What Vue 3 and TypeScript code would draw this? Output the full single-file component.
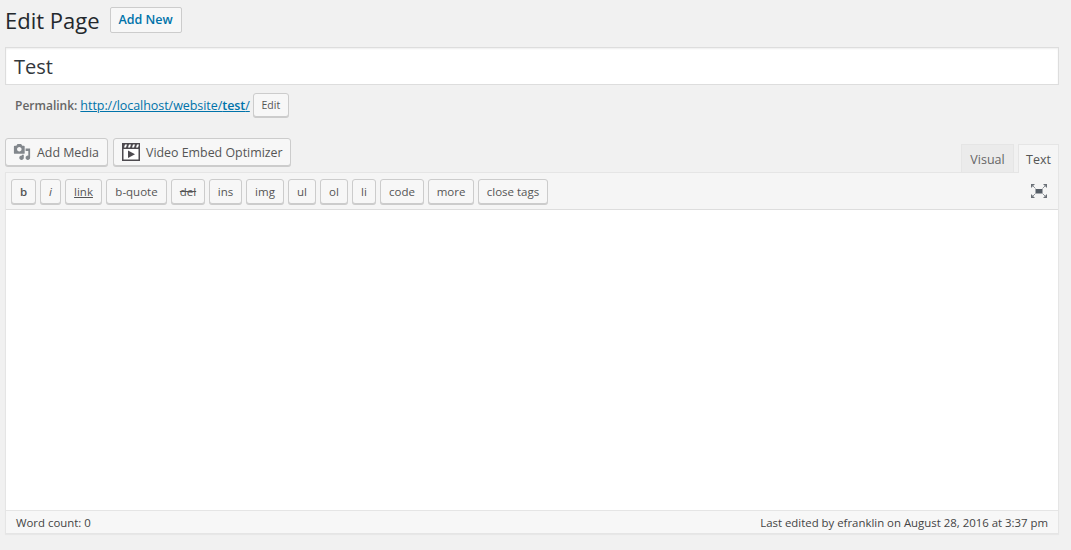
<script setup lang="ts">
interface QuickTag {
  label: string
  width: number
  kind?: string
}

const tags: QuickTag[] = [
  { label: 'b', width: 25, kind: 'bold' },
  { label: 'i', width: 21, kind: 'italic' },
  { label: 'link', width: 37, kind: 'under' },
  { label: 'b-quote', width: 61 },
  { label: 'del', width: 34, kind: 'strike' },
  { label: 'ins', width: 33 },
  { label: 'img', width: 38 },
  { label: 'ul', width: 28 },
  { label: 'ol', width: 28 },
  { label: 'li', width: 24 },
  { label: 'code', width: 44 },
  { label: 'more', width: 46 },
  { label: 'close tags', width: 70 }
]
</script>

<template>
  <div class="page">
    <header class="heading">
      <h1>Edit Page</h1>
      <a class="add-new">Add New</a>
    </header>

    <div class="title-box">Test</div>

    <div class="permalink">
      <strong>Permalink:</strong>
      <a class="perma-link">http://localhost/website/<b>test</b>/</a>
      <button class="btn edit-slug">Edit</button>
    </div>

    <div class="editor-top">
      <div class="media">
        <button class="btn media-btn add-media">
          <svg width="18" height="18" viewBox="0 0 20 20" aria-hidden="true">
            <path fill="#82878c" d="M13 11V4c0-.55-.45-1-1-1h-1.670L9 1H5L3.670 3H2c-.55 0-1 .45-1 1v7c0 .55.45 1 1 1h10c.55 0 1-.45 1-1zM7 4.500c1.380 0 2.500 1.120 2.500 2.500S8.380 9.500 7 9.500 4.500 8.380 4.500 7 5.620 4.500 7 4.500zM14 6h5v10.500c0 1.380-1.120 2.500-2.500 2.500S14 17.880 14 16.500s1.120-2.500 2.500-2.500c.17 0 .34.020.5.050V9h-3V6zm-4 8.050V13h2v3.500c0 1.380-1.120 2.500-2.500 2.500S7 17.880 7 16.500 8.120 14 9.500 14c.17 0 .34.020.5.050z" />
          </svg>
          Add Media
        </button>
        <button class="btn media-btn veo">
          <svg width="18" height="18" viewBox="0 0 18 18" aria-hidden="true">
            <path fill="#4d4a4f" d="M0 0h18v18H0z" />
            <path fill="#fff" d="M1.500 6h15v10.500h-15z" />
            <path fill="#fff" d="M3 1.500h2l-1 3H2zM7 1.500h2l-1 3H6zM11 1.500h2l-1 3h-2zM15 1.500h2l-1 3h-2z" />
            <path fill="#4d4a4f" d="M6 7.500l7 3.700-7 3.800z" />
          </svg>
          Video Embed Optimizer
        </button>
      </div>
      <div class="tabs">
        <span class="tab visual">Visual</span>
        <span class="tab text">Text</span>
      </div>
    </div>

    <section class="editor">
      <div class="toolbar">
        <button
          v-for="tag in tags"
          :key="tag.label"
          class="btn tag"
          :class="tag.kind"
          :style="{ width: tag.width + 'px' }"
        >{{ tag.label }}</button>
        <svg class="fullscreen" width="18" height="16" viewBox="0 0 18 16" aria-hidden="true">
          <path fill="#555d66" d="M5.500 6h7v4.500h-7z" />
          <path fill="#6b7077" d="M1 1h4L1 5zM17 1h-4l4 4zM1 15h4l-4-4zM17 15h-4l4-4z" />
          <path stroke="#8f959b" stroke-width="1" fill="none" d="M2.500 2.500L5.500 5.500M15.500 2.500L12.500 5.500M2.500 13.500L5.500 10.500M15.500 13.500L12.500 10.500" />
        </svg>
      </div>
      <div class="content"></div>
      <footer class="status">
        <span>Word count: 0</span>
        <span>Last edited by efranklin on August 28, 2016 at 3:37 pm</span>
      </footer>
    </section>
  </div>
</template>

<style>
html,
body {
  margin: 0;
  background: #f1f1f1;
}
</style>

<style scoped>
.page {
  box-sizing: border-box;
  width: 1071px;
  height: 550px;
  padding: 7px 12px 0 5px;
  font-family: "Open Sans", "Noto Sans", sans-serif;
  color: #444;
  font-size: 12px;
  background: #f1f1f1;
}
.heading {
  display: flex;
  align-items: center;
  height: 26px;
  gap: 10px;
}
h1 {
  margin: 0;
  font-size: 22px;
  font-weight: 400;
  color: #23282d;
  line-height: 26px;
}
.add-new {
  box-sizing: border-box;
  width: 72px;
  height: 26px;
  line-height: 24px;
  text-align: center;
  font-size: 12.500px;
  font-weight: 600;
  color: #0073aa;
  background: #f7f7f7;
  border: 1px solid #ccc;
  border-radius: 2px;
}
.title-box {
  box-sizing: border-box;
  height: 38px;
  margin-top: 14px;
  padding-left: 8px;
  line-height: 38px;
  font-size: 20px;
  color: #32373c;
  background: #fff;
  border: 1px solid #ddd;
  box-shadow: inset 0 1px 2px rgba(0, 0, 0, 0.07);
}
.permalink {
  display: flex;
  align-items: center;
  height: 24px;
  margin-top: 8px;
  padding-left: 10px;
  font-size: 12px;
  color: #666;
  white-space: nowrap;
}
.permalink strong {
  font-weight: 600;
}
.perma-link {
  margin-left: 3px;
  font-size: 12.500px;
  letter-spacing: -0.05px;
  color: #0073aa;
  text-decoration: underline;
}
.perma-link b {
  font-weight: 600;
}
.btn {
  box-sizing: border-box;
  padding: 0;
  font-family: inherit;
  color: #555;
  white-space: nowrap;
  background: #f7f7f7;
  border: 1px solid #ccc;
  border-radius: 3px;
  box-shadow: 0 1px 0 #ccc;
}
.edit-slug {
  width: 36px;
  height: 24px;
  margin-left: 3px;
  font-size: 10.500px;
}
.editor-top {
  display: flex;
  justify-content: space-between;
  align-items: flex-end;
  margin-top: 21px;
  height: 34px;
}
.media {
  display: flex;
  gap: 5px;
  align-self: flex-start;
}
.media-btn {
  display: flex;
  align-items: center;
  gap: 6px;
  height: 28px;
  padding-left: 8px;
  font-size: 12.400px;
}
.add-media {
  width: 103px;
  padding-left: 7px;
}
.veo {
  width: 178px;
}
.tabs {
  display: flex;
  align-items: flex-end;
  gap: 4px;
}
.tab {
  box-sizing: border-box;
  display: block;
  text-align: center;
  font-size: 12.500px;
  color: #666;
  border: 1px solid #e5e5e5;
}
.visual {
  width: 53px;
  height: 28px;
  line-height: 29px;
  border-bottom: none;
  background: #ebebeb;
}
.text {
  width: 41px;
  height: 29px;
  line-height: 30px;
  margin-bottom: -1px;
  border-bottom: none;
  color: #555;
  background: #f5f5f5;
  position: relative;
}
.editor {
  border: 1px solid #e5e5e5;
  box-shadow: 0 1px 1px rgba(0, 0, 0, 0.04);
  background: #fff;
}
.toolbar {
  box-sizing: border-box;
  display: flex;
  align-items: center;
  gap: 4px;
  height: 37px;
  padding: 0 10px 0 5px;
  background: #f5f5f5;
  border-bottom: 1px solid #ddd;
}
.tag {
  height: 25px;
  font-size: 11.500px;
  color: #555;
}
.bold {
  font-weight: 600;
}
.italic {
  font-style: italic;
}
.under {
  text-decoration: underline;
}
.strike {
  text-decoration: line-through;
}
.fullscreen {
  margin-left: auto;
}
.content {
  height: 300px;
  background: #fff;
}
.status {
  box-sizing: border-box;
  display: flex;
  justify-content: space-between;
  align-items: center;
  height: 23px;
  padding: 0 10px;
  font-size: 11.400px;
  color: #444;
  background: #f7f7f7;
  border-top: 1px solid #e5e5e5;
}
</style>
